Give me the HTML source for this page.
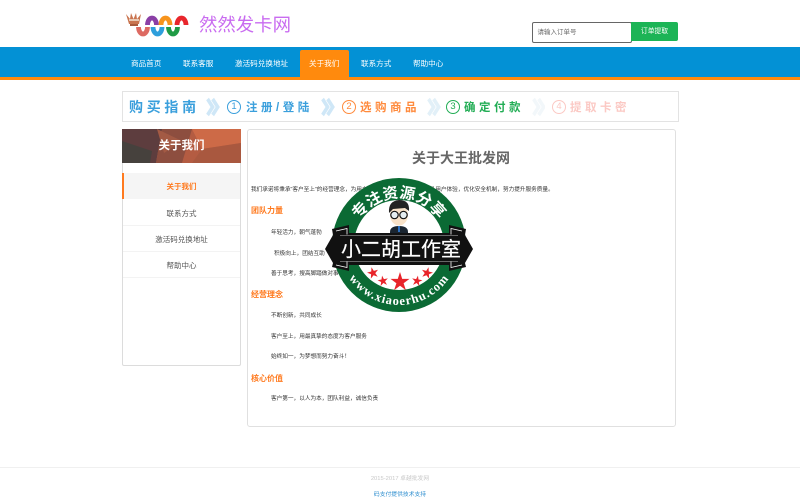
<!DOCTYPE html>
<html lang="zh"><head><meta charset="utf-8"><title>关于我们</title>
<style>
html,body{margin:0;padding:0;background:#fff}
body{width:800px;height:499px;position:relative;overflow:hidden;font-family:"Liberation Sans","Noto Sans CJK SC",sans-serif;color:#555;filter:blur(.25px)}
.a{position:absolute;white-space:nowrap}
.nav{top:47px;height:30px;line-height:33px;font-size:7.6px;color:#fff}
.p{font-size:5.65px;color:#333;line-height:8px}
.h{font-size:8px;font-weight:bold;color:#ff7a1f;line-height:10px;left:251px}
.si{left:123px;width:117px;text-align:center;font-size:7.5px;line-height:26px;height:26px;border-bottom:1px solid #f3f3f3;color:#555}
.g{font-weight:bold;top:100px;font-size:11.5px;line-height:17px;letter-spacing:3.5px}
.c{top:100px;width:12px;height:12px;border:1px solid;border-radius:50%;font-size:9.5px;line-height:12px;text-align:center}
</style></head><body>

<svg class="a" style="left:124px;top:10px" width="70" height="30" viewBox="124 10 70 30">
<path d="M126 14 L130 19 L131 13 L133.500 19 L136 13 L137 19 L141 14 L139 24 L129 24Z" fill="#c9744f"/>
<rect x="129" y="19" width="10" height="2" fill="#e8c9b4"/>
<rect x="130" y="24" width="8" height="2" fill="#a85a3c"/>
<g fill="none" stroke-width="4.800">
<path d="M138.500 27 a4.500 7 0 0 0 9 0" stroke="#dd6a62"/>
<path d="M147.500 25 a4.500 7 0 0 1 9 0" stroke="#8a3fa6"/>
<path d="M153 27 a4.500 7 0 0 0 9 0" stroke="#2e9fdc"/>
<path d="M161 25 a4.500 7 0 0 1 9 0" stroke="#f7941d"/>
<path d="M168.500 27 a4.500 7 0 0 0 9 0" stroke="#1f9b45"/>
<path d="M177 25 a4.500 7 0 0 1 9 0" stroke="#e8262c"/>
</g>
</svg>
<div class="a" style="left:199px;top:12px;font-size:18.400px;line-height:25px;color:#c96cf0">然然发卡网</div>

<div class="a" style="left:531.500px;top:21.500px;width:98px;height:19px;border:1px solid #666;border-radius:2px;font-size:6.500px;line-height:19px;color:#666;text-indent:5px;background:#fff">请输入订单号</div>
<div class="a" style="left:631px;top:22px;width:47px;height:19px;background:#1cb456;border-radius:0 2px 2px 0;color:#fff;font-size:6.800px;line-height:20px;text-align:center">订单提取</div>

<div class="a" style="left:0;top:47px;width:800px;height:30px;background:#0391d5"></div>
<div class="a" style="left:0;top:77px;width:800px;height:3px;background:#ff8a0d"></div>
<div class="a" style="left:300px;top:50px;width:49px;height:28px;background:#ff8a0d;border-radius:2px 2px 0 0"></div>
<div class="a nav" style="left:131px">商品首页</div>
<div class="a nav" style="left:183px">联系客服</div>
<div class="a nav" style="left:235px">激活码兑换地址</div>
<div class="a nav" style="left:309px">关于我们</div>
<div class="a nav" style="left:361px">联系方式</div>
<div class="a nav" style="left:413px">帮助中心</div>

<div class="a" style="left:122px;top:91px;width:555px;height:29px;border:1px solid #e3e3e3"></div>
<div class="a g" style="left:129px;top:99px;font-size:14px;color:#3a9fdc;letter-spacing:3.700px">购买指南</div>
<svg class="a" style="left:205px;top:96px" width="340" height="22" viewBox="0 0 340 22" fill="none" stroke-width="4">
<g stroke="#cfe7f7"><path d="M3 3l6 8-6 8M9 3l6 8-6 8" transform="scale(.85,1)"/></g>
<g stroke="#cfe7f7"><path d="M3 3l6 8-6 8M9 3l6 8-6 8" transform="translate(115,0) scale(.85,1)"/></g>
<g stroke="#e2f0f8"><path d="M3 3l6 8-6 8M9 3l6 8-6 8" transform="translate(221,0) scale(.85,1)"/></g>
<g stroke="#f2f7fa"><path d="M3 3l6 8-6 8M9 3l6 8-6 8" transform="translate(326,0) scale(.85,1)"/></g>
</svg>
<div class="a c" style="left:227px;color:#3a9fdc">1</div>
<div class="a g" style="left:246px;color:#3a9fdc">注册/登陆</div>
<div class="a c" style="left:342px;color:#ff8a3c">2</div>
<div class="a g" style="left:360px;color:#ff8a3c">选购商品</div>
<div class="a c" style="left:446px;color:#22ad55">3</div>
<div class="a g" style="left:464px;color:#22ad55">确定付款</div>
<div class="a c" style="left:552px;color:#fbc9c4">4</div>
<div class="a g" style="left:570px;color:#fbc9c4">提取卡密</div>

<div class="a" style="left:122px;top:129px;width:117px;height:235px;border:1px solid #dcdcdc;border-radius:2px"></div>
<svg class="a" style="left:122px;top:129px" width="119" height="34" viewBox="0 0 119 34">
<rect width="119" height="34" fill="#b45c42"/>
<polygon points="0,0 40,0 34,34 0,34" fill="#5d3d3e"/>
<polygon points="0,12 30,22 28,34 0,34" fill="#46413d"/>
<polygon points="40,0 70,0 60,34 34,34" fill="#8d4e3f"/>
<polygon points="70,0 119,0 119,14 80,20" fill="#cd6a47"/>
<polygon points="80,20 119,14 119,34 70,34" fill="#a9583f"/>
<polygon points="35,0 60,12 42,24" fill="#a35a44"/>
</svg>
<div class="a" style="left:122px;top:129px;width:119px;text-align:center;color:#fff;font-weight:bold;font-size:11.500px;line-height:34px">关于我们</div>
<div class="a" style="left:123px;top:173px;width:117px;height:26px;background:#f5f5f5"></div>
<div class="a" style="left:122px;top:173px;width:2px;height:26px;background:#ff7a1f"></div>
<div class="a si" style="top:174px;color:#ff7a1f;font-weight:bold;border-color:transparent">关于我们</div>
<div class="a si" style="top:200px;height:25px;line-height:27px">联系方式</div>
<div class="a si" style="top:226px;height:25px;line-height:27px">激活码兑换地址</div>
<div class="a si" style="top:252px;height:25px;line-height:27px">帮助中心</div>

<div class="a" style="left:247px;top:129px;width:427px;height:296px;border:1px solid #e0e0e0;border-radius:3px"></div>
<div class="a" style="left:412px;top:149px;font-size:14px;font-weight:bold;line-height:18px;color:#666">关于大王批发网</div>
<div class="a p" style="left:251px;top:186px">我们承诺将秉承“客户至上”的经营理念，为用户提供优质的服务，不断提升用户体验，优化安全机制，努力提升服务质量。</div>
<div class="a h" style="top:206px">团队力量</div>
<div class="a p" style="left:271px;top:229px">年轻活力，朝气蓬勃</div>
<div class="a p" style="left:274px;top:250px">积极向上，团结互助</div>
<div class="a p" style="left:271px;top:270px">善于思考，搜高脚踏做对事</div>
<div class="a h" style="top:290px">经营理念</div>
<div class="a p" style="left:271px;top:312px">不断创新，共同成长</div>
<div class="a p" style="left:271px;top:333px">客户至上，用最真挚的态度为客户服务</div>
<div class="a p" style="left:271px;top:353px">始终如一，为梦想而努力奋斗！</div>
<div class="a h" style="top:374px">核心价值</div>
<div class="a p" style="left:271px;top:395px">客户第一，以人为本，团队利益，诚信负责</div>

<svg class="a" style="left:320px;top:172px" width="160" height="146" viewBox="320 172 160 146">
<defs>
<path id="t" d="M352 245 a47 47 0 0 1 94 0"/>
<path id="b" d="M339 245 a60 60 0 0 0 120 0"/>
<polygon id="s" points="0,-10 2.200,-3.100 9.500,-3.100 3.600,1.200 5.900,8.100 0,3.800 -5.900,8.100 -3.600,1.200 -9.500,-3.100 -2.200,-3.100"/>
</defs>
<circle cx="399" cy="245" r="67" fill="#0b6a34"/>
<circle cx="399" cy="245" r="45" fill="#fff"/>
<text font-family="'Liberation Sans','Noto Sans CJK SC',sans-serif" font-weight="bold" font-size="15.500" fill="#fff" letter-spacing=".2"><textPath href="#t" startOffset="50%" text-anchor="middle">专注资源分享</textPath></text>
<text font-family="'Liberation Serif',serif" font-weight="bold" font-size="12.500" fill="#fff" letter-spacing="1"><textPath href="#b" startOffset="50%" text-anchor="middle">www.xiaoerhu.com</textPath></text>
<path d="M390 232 q0-6 9-6 q9 0 9 6 v3 h-18z" fill="#1a2530"/>
<ellipse cx="399" cy="215" rx="9" ry="10.500" fill="#f8e2c8"/>
<path d="M389 213 q-1-12 10-13 q11 0 10 11 l-4-3 -12 1z" fill="#222"/>
<circle cx="394.500" cy="215" r="3.700" fill="#e6eef0" stroke="#111" stroke-width="1.200"/>
<circle cx="403.500" cy="215" r="3.700" fill="#e6eef0" stroke="#111" stroke-width="1.200"/>
<rect x="398" y="226" width="2" height="6" fill="#2a6fc0"/>
<path d="M332 229 l17 -4 v8 h100 v-8 l17 4 -1 6 8 14 -8 14 1 4 -17 4 v-6 h-100 v6 l-17 -4 1 -4 -8 -14 8 -14z" fill="#111"/>
<path d="M336 231 l11-2.500 v6 M462 231 l-11-2.500 v6 M336 265 l11 2.500 v-6 M462 265 l-11 2.500 v-6" stroke="#fff" stroke-width=".8" fill="none"/>
<rect x="340" y="235" width="118" height=".8" fill="#fff" opacity=".45"/>
<rect x="340" y="261" width="118" height=".8" fill="#fff" opacity=".45"/>
<text x="401" y="256" text-anchor="middle" font-family="'Liberation Sans','Noto Sans CJK SC',sans-serif" font-size="20" fill="#fff" stroke="#fff" stroke-width=".2">小二胡工作室</text>
<g fill="#e8242a">
<use href="#s" transform="translate(400,282)"/>
<use href="#s" transform="translate(373,273) rotate(-15) scale(.6)"/>
<use href="#s" transform="translate(427,273) rotate(15) scale(.6)"/>
<use href="#s" transform="translate(383,281) rotate(-10) scale(.55)"/>
<use href="#s" transform="translate(417,281) rotate(10) scale(.55)"/>
</g>
</svg>

<div class="a" style="left:0;top:467px;width:800px;height:1px;background:#f0f0f0"></div>
<div class="a" style="left:0;top:475px;width:800px;text-align:center;font-size:5.800px;line-height:8px;color:#c8c8c8">2015-2017 卓越批发网</div>
<div class="a" style="left:0;top:491px;width:800px;text-align:center;font-size:5.800px;line-height:8px;color:#2f8fd0">码支付提供技术支持</div>
</body></html>
